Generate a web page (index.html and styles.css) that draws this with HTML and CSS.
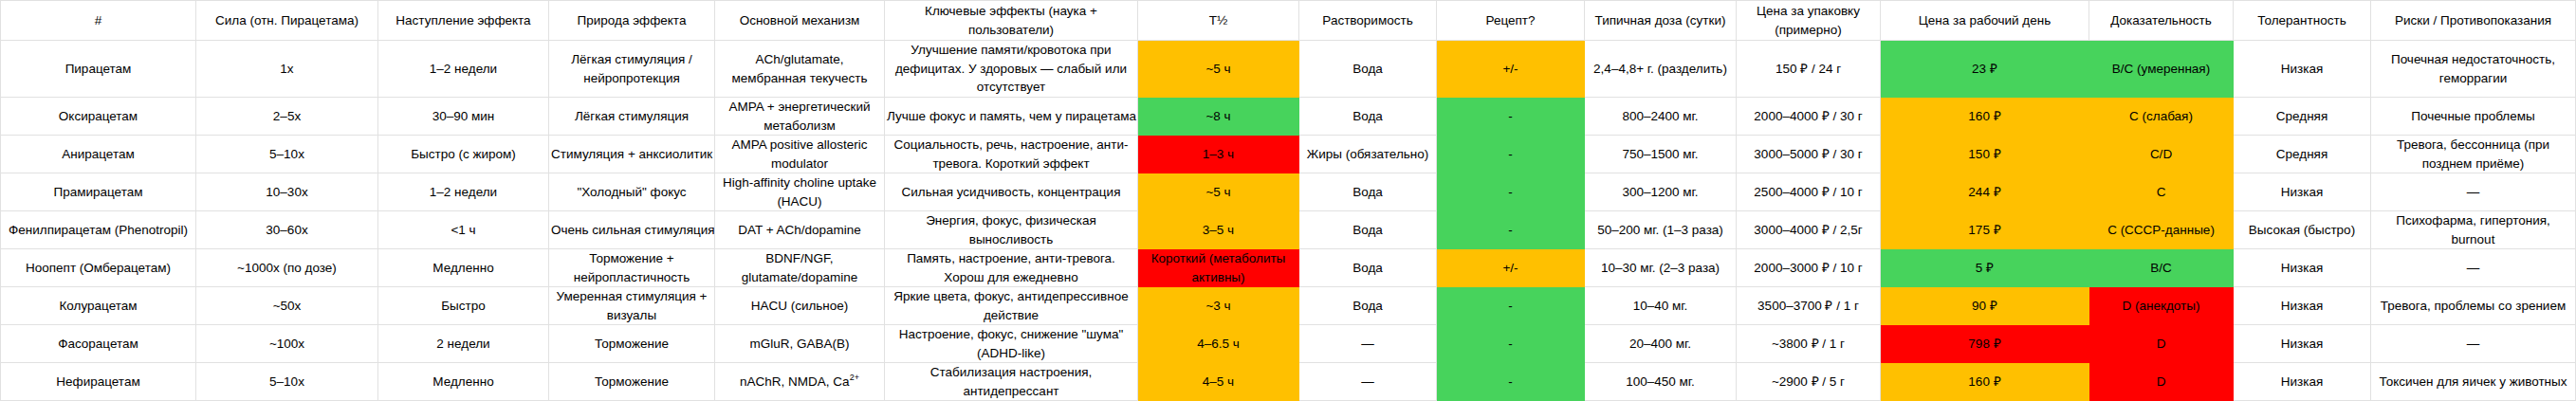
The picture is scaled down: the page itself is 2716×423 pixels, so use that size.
FILE: index.html
```html
<!DOCTYPE html>
<html lang="ru">
<head>
<meta charset="utf-8">
<title>Рацетамы — сравнение</title>
<link rel="stylesheet" href="styles.css">
</head>
<body>
<table class="sheet">
  <colgroup>
    <col class="w207"><col class="w192"><col class="w180"><col class="w175"><col class="w179">
    <col class="w267"><col class="w170"><col class="w145"><col class="w156"><col class="w160">
    <col class="w152"><col class="w220"><col class="w152"><col class="w145"><col class="w216">
  </colgroup>
  <thead>
    <tr class="head">
      <th class="first">#</th>
      <th>Сила (отн. Пирацетама)</th>
      <th>Наступление эффекта</th>
      <th>Природа эффекта</th>
      <th>Основной механизм</th>
      <th>Ключевые эффекты (наука +<br>пользователи)</th>
      <th>T½</th>
      <th>Растворимость</th>
      <th>Рецепт?</th>
      <th>Типичная доза (сутки)</th>
      <th>Цена за упаковку<br>(примерно)</th>
      <th>Цена за рабочий день</th>
      <th>Доказательность</th>
      <th>Толерантность</th>
      <th>Риски / Противопоказания</th>
    </tr>
  </thead>
  <tbody>
    <tr class="tall">
      <td class="first">Пирацетам</td>
      <td>1x</td>
      <td>1–2 недели</td>
      <td>Лёгкая стимуляция /<br>нейропротекция</td>
      <td>ACh/glutamate,<br>мембранная текучесть</td>
      <td>Улучшение памяти/кровотока при<br>дефицитах. У здоровых — слабый или<br>отсутствует</td>
      <td class="y">~5 ч</td>
      <td>Вода</td>
      <td class="y">+/-</td>
      <td>2,4–4,8+ г. (разделить)</td>
      <td>150 ₽ / 24 г</td>
      <td class="g">23 ₽</td>
      <td class="g">B/C (умеренная)</td>
      <td>Низкая</td>
      <td>Почечная недостаточность,<br>геморрагии</td>
    </tr>
    <tr>
      <td class="first">Оксирацетам</td>
      <td>2–5x</td>
      <td>30–90 мин</td>
      <td>Лёгкая стимуляция</td>
      <td>AMPA + энергетический<br>метаболизм</td>
      <td>Лучше фокус и память, чем у пирацетама</td>
      <td class="g">~8 ч</td>
      <td>Вода</td>
      <td class="g">-</td>
      <td>800–2400 мг.</td>
      <td>2000–4000 ₽ / 30 г</td>
      <td class="y">160 ₽</td>
      <td class="y">C (слабая)</td>
      <td>Средняя</td>
      <td>Почечные проблемы</td>
    </tr>
    <tr>
      <td class="first">Анирацетам</td>
      <td>5–10x</td>
      <td>Быстро (с жиром)</td>
      <td>Стимуляция + анксиолитик</td>
      <td>AMPA positive allosteric<br>modulator</td>
      <td>Социальность, речь, настроение, анти-<br>тревога. Короткий эффект</td>
      <td class="r">1–3 ч</td>
      <td>Жиры (обязательно)</td>
      <td class="g">-</td>
      <td>750–1500 мг.</td>
      <td>3000–5000 ₽ / 30 г</td>
      <td class="y">150 ₽</td>
      <td class="y">C/D</td>
      <td>Средняя</td>
      <td>Тревога, бессонница (при<br>позднем приёме)</td>
    </tr>
    <tr>
      <td class="first">Прамирацетам</td>
      <td>10–30x</td>
      <td>1–2 недели</td>
      <td>"Холодный" фокус</td>
      <td>High-affinity choline uptake<br>(HACU)</td>
      <td>Сильная усидчивость, концентрация</td>
      <td class="y">~5 ч</td>
      <td>Вода</td>
      <td class="g">-</td>
      <td>300–1200 мг.</td>
      <td>2500–4000 ₽ / 10 г</td>
      <td class="y">244 ₽</td>
      <td class="y">C</td>
      <td>Низкая</td>
      <td>—</td>
    </tr>
    <tr>
      <td class="first">Фенилпирацетам (Phenotropil)</td>
      <td>30–60x</td>
      <td>&lt;1 ч</td>
      <td>Очень сильная стимуляция</td>
      <td>DAT + ACh/dopamine</td>
      <td>Энергия, фокус, физическая<br>выносливость</td>
      <td class="y">3–5 ч</td>
      <td>Вода</td>
      <td class="g">-</td>
      <td>50–200 мг. (1–3 раза)</td>
      <td>3000–4000 ₽ / 2,5г</td>
      <td class="y">175 ₽</td>
      <td class="y">C (СССР-данные)</td>
      <td>Высокая (быстро)</td>
      <td>Психофарма, гипертония,<br>burnout</td>
    </tr>
    <tr>
      <td class="first">Ноопепт (Омберацетам)</td>
      <td>~1000x (по дозе)</td>
      <td>Медленно</td>
      <td>Торможение +<br>нейропластичность</td>
      <td>BDNF/NGF,<br>glutamate/dopamine</td>
      <td>Память, настроение, анти-тревога.<br>Хорош для ежедневно</td>
      <td class="r">Короткий (метаболиты<br>активны)</td>
      <td>Вода</td>
      <td class="y">+/-</td>
      <td>10–30 мг. (2–3 раза)</td>
      <td>2000–3000 ₽ / 10 г</td>
      <td class="g">5 ₽</td>
      <td class="g">B/C</td>
      <td>Низкая</td>
      <td>—</td>
    </tr>
    <tr>
      <td class="first">Колурацетам</td>
      <td>~50x</td>
      <td>Быстро</td>
      <td>Умеренная стимуляция +<br>визуалы</td>
      <td>HACU (сильное)</td>
      <td>Яркие цвета, фокус, антидепрессивное<br>действие</td>
      <td class="y">~3 ч</td>
      <td>Вода</td>
      <td class="g">-</td>
      <td>10–40 мг.</td>
      <td>3500–3700 ₽ / 1 г</td>
      <td class="y">90 ₽</td>
      <td class="r">D (анекдоты)</td>
      <td>Низкая</td>
      <td>Тревога, проблемы со зрением</td>
    </tr>
    <tr>
      <td class="first">Фасорацетам</td>
      <td>~100x</td>
      <td>2 недели</td>
      <td>Торможение</td>
      <td>mGluR, GABA(B)</td>
      <td>Настроение, фокус, снижение "шума"<br>(ADHD-like)</td>
      <td class="y">4–6.5 ч</td>
      <td>—</td>
      <td class="g">-</td>
      <td>20–400 мг.</td>
      <td>~3800 ₽ / 1 г</td>
      <td class="r">798 ₽</td>
      <td class="r">D</td>
      <td>Низкая</td>
      <td>—</td>
    </tr>
    <tr>
      <td class="first">Нефирацетам</td>
      <td>5–10x</td>
      <td>Медленно</td>
      <td>Торможение</td>
      <td>nAChR, NMDA, Ca<sup>2+</sup></td>
      <td>Стабилизация настроения,<br>антидепрессант</td>
      <td class="y">4–5 ч</td>
      <td>—</td>
      <td class="g">-</td>
      <td>100–450 мг.</td>
      <td>~2900 ₽ / 5 г</td>
      <td class="y">160 ₽</td>
      <td class="r">D</td>
      <td>Низкая</td>
      <td>Токсичен для яичек у животных</td>
    </tr>
  </tbody>
</table>
</body>
</html>
```

FILE: styles.css
```css
html, body {
  margin: 0;
  padding: 0;
  background: #ffffff;
}

.sheet {
  table-layout: fixed;
  width: 2716px;
  border-collapse: separate;
  border-spacing: 0;
  font-family: "Liberation Sans", Arial, sans-serif;
  font-size: 13.5px;
  line-height: 19.5px;
  color: #000000;
}

.sheet th,
.sheet td {
  padding: 0 2px;
  text-align: center;
  vertical-align: middle;
  font-weight: normal;
  white-space: nowrap;
  border-right: 1px solid #e1e1e1;
  border-bottom: 1px solid #e1e1e1;
  overflow: visible;
}

.sheet th {
  border-top: 1px solid #e1e1e1;
}

.sheet .first {
  border-left: 1px solid #e1e1e1;
}

.head { height: 43px; }
.sheet tbody tr { height: 40px; }
.sheet tbody tr.tall { height: 60px; }

.sheet sup {
  font-size: 9px;
  line-height: 0;
  vertical-align: 6px;
}

.sheet .y { background: #ffc000; border-color: #ffc000; }
.sheet .g { background: #47d35c; border-color: #47d35c; }
.sheet .r { background: #ff0000; border-color: #ff0000; }

.w207 { width: 207px; }
.w192 { width: 192px; }
.w180 { width: 180px; }
.w175 { width: 175px; }
.w179 { width: 179px; }
.w267 { width: 267px; }
.w170 { width: 170px; }
.w145 { width: 145px; }
.w156 { width: 156px; }
.w160 { width: 160px; }
.w152 { width: 152px; }
.w220 { width: 220px; }
.w216 { width: 216px; }
```
